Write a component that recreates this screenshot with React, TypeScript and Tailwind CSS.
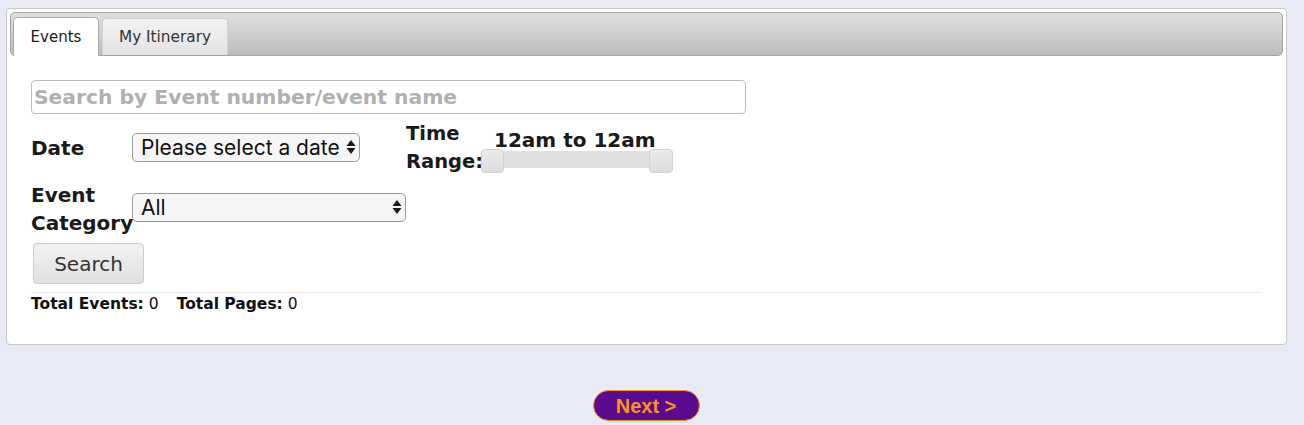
import React from "react";

const Arrows = () => (
  <svg width="10" height="16" viewBox="0 0 10 16" className="pointer-events-none">
    <path d="M5 1 L9.5 7 L0.5 7 Z" fill="#1a1a1a" />
    <path d="M5 15 L9.5 9 L0.5 9 Z" fill="#1a1a1a" />
  </svg>
);

function FakeSelect({ text, w }: { text: string; w: string }) {
  return (
    <div className={`relative ${w}`}>
      <select
        className="w-full h-[29px] appearance-none rounded-[5px] border border-[#9a9a9a] bg-[#f6f6f6] pl-[8px] pr-[20px] text-[21px] font-normal leading-[27px] text-[#111] outline-none"
        style={{ fontFamily: "Inter, 'Liberation Sans', sans-serif" }}
        defaultValue={text}
      >
        <option>{text}</option>
      </select>
      <div className="absolute right-[4px] top-[6px]">
        <Arrows />
      </div>
    </div>
  );
}

export default function App() {
  const dv = { fontFamily: "'DejaVu Sans', Verdana, sans-serif" };
  return (
    <div className="w-full h-[425px] bg-[#e8eaf6] pt-[8px] overflow-hidden" style={dv}>
      <div className="ml-[6px] w-[1281px] h-[337px] rounded-[4px] border border-[#c9c9c9] bg-white p-[3px]">
        {/* tab header */}
        <div className="flex items-end gap-[3px] h-[44px] rounded-[5px] border border-[#a3a3a3] bg-gradient-to-b from-[#e0e0e0] to-[#bdbdbd] pl-[2px]">
          <div className="-mb-[1px] flex h-[39px] w-[86px] items-center justify-center rounded-t-[5px] border border-b-0 border-[#a8a8a8] bg-white text-[15px] text-[#1a1a1a]">
            Events
          </div>
          <div className="flex h-[37px] w-[126px] items-center justify-center rounded-t-[4px] border border-b-0 border-[#d2d2d2] bg-gradient-to-b from-[#f3f3f3] to-[#e3e3e3] text-[15.3px] text-[#333]">
            My Itinerary
          </div>
        </div>

        {/* content */}
        <div className="pl-[21px] pr-[22px] pt-[24px]">
          <input
            className="block h-[34px] w-[715px] rounded-[4px] border border-[#bdbdbd] px-[2px] text-[20.3px] font-bold outline-none placeholder:text-[#b0b0b0]"
            style={dv}
            placeholder="Search by Event number/event name"
          />

          <div className="mt-[5px] grid grid-cols-[101px_274px_75px_200px] text-[20px] font-bold leading-[24px] text-[#1a1a1a]">
            {/* row 1 */}
            <div className="flex items-center pt-[1px]">Date</div>
            <div className="flex items-center">
              <FakeSelect text="Please select a date" w="w-[228px]" />
            </div>
            <div className="pt-[1px] text-[19.5px] leading-[28px]">Time Range:</div>
            <div className="flex flex-col pt-[9px]">
              <div className="pl-[13px] text-[20px] leading-[24px]">12am to 12am</div>
              <div className="relative mt-[-3px] h-[24px] w-[192px]">
                <div className="absolute left-0 right-0 top-[2px] h-[17px] bg-[#e0e0e0]" />
                <div className="absolute left-0 top-0 h-[24px] w-[23px] rounded-[4px] border border-[#d2d2d2] bg-gradient-to-b from-[#ebebeb] to-[#dcdcdc]" />
                <div className="absolute right-0 top-0 h-[24px] w-[24px] rounded-[4px] border border-[#d2d2d2] bg-gradient-to-b from-[#ebebeb] to-[#dcdcdc]" />
              </div>
            </div>

            {/* row 2 */}
            <div className="pt-[5px] leading-[28px]">
              Event
              <br />
              Category
            </div>
            <div className="col-span-3 flex items-center pt-[5px] pb-[4px]">
              <FakeSelect text="All" w="w-[274px]" />
            </div>
          </div>

          <button
            className="ml-[2px] mt-[6px] block h-[41px] w-[111px] rounded-[4px] border border-[#cbcbcb] bg-gradient-to-b from-[#f2f2f2] to-[#e1e1e1] text-[20px] text-[#333]"
            style={dv}
          >
            Search
          </button>

          <div className="mt-[8px] border-t border-[#e6e6e6] text-[15.5px] leading-[22px] text-[#111]">
            <span className="font-bold">Total Events:</span> 0
            <span className="ml-[18px] font-bold">Total Pages:</span> 0
          </div>
        </div>
      </div>

      <div className="mt-[45px] flex justify-center pr-[12px]">
        <button
          className="h-[31px] w-[107px] rounded-full border border-[#f7941e] bg-[#5b0b8d] text-[20px] font-bold text-[#f7941e]"
          style={{ fontFamily: "'Liberation Sans', Arial, sans-serif" }}
        >
          Next &gt;
        </button>
      </div>
    </div>
  );
}
